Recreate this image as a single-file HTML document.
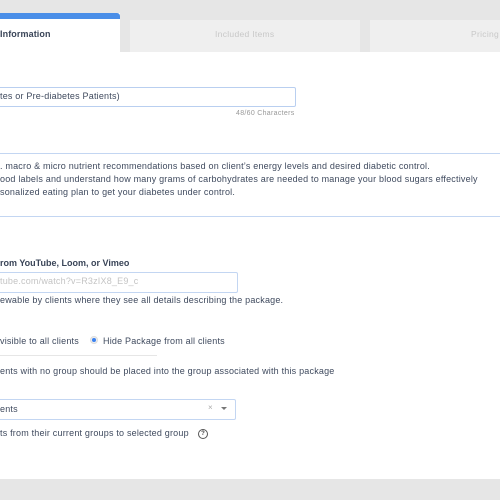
<!DOCTYPE html>
<html><head><style>
body{margin:0;width:500px;height:500px;overflow:hidden;background:#fff;font-family:"Liberation Sans",sans-serif;color:#3f4a5e;position:relative}
.a{position:absolute;white-space:nowrap}
.s{font-size:9px;letter-spacing:0.2px}
</style></head><body>
<div class="a" style="left:0;top:0;width:500px;height:52px;background:#e6e6e6"></div>
<div class="a" style="left:0;top:13px;width:120px;height:39px;background:#fff"></div>
<div class="a" style="left:0;top:13px;width:120px;height:6px;background:#4a8ee8;border-radius:0 3px 0 0"></div>
<div class="a" style="left:0;top:29px;font-size:9px;font-weight:bold;color:#3a4558;letter-spacing:0.1px">Information</div>
<div class="a" style="left:130px;top:20px;width:230px;height:32px;background:#efefef"></div>
<div class="a" style="left:215px;top:29px;font-size:8.5px;letter-spacing:0.3px;color:#c8c8c8">Included Items</div>
<div class="a" style="left:370px;top:20px;width:130px;height:32px;background:#efefef"></div>
<div class="a" style="left:471px;top:29px;font-size:8.5px;letter-spacing:0.3px;color:#c8c8c8">Pricing</div>

<div class="a" style="left:-5px;top:87px;width:299px;height:18px;border:1px solid #b9cff0;border-radius:2px"></div>
<div class="a s" style="left:0;top:91px">tes or Pre-diabetes Patients)</div>
<div class="a" style="left:236px;top:110px;width:58px;text-align:right;font-size:7px;letter-spacing:0.3px;color:#999">48/60 Characters</div>

<div class="a" style="left:-5px;top:153px;width:520px;height:62px;border:1px solid #c3d6f2"></div>
<div class="a s" style="left:0;top:161px">. macro &amp; micro nutrient recommendations based on client’s energy levels and desired diabetic control.</div>
<div class="a s" style="left:0;top:174px">ood labels and understand how many grams of carbohydrates are needed to manage your blood sugars effectively</div>
<div class="a s" style="left:0;top:187px">sonalized eating plan to get your diabetes under control.</div>

<div class="a s" style="left:0;top:258px;font-weight:bold;color:#3a4558;letter-spacing:0">rom YouTube, Loom, or Vimeo</div>
<div class="a" style="left:-5px;top:272px;width:241px;height:19px;border:1px solid #c3d6f2;border-radius:2px"></div>
<div class="a s" style="left:0;top:276px;color:#c4c4c4">tube.com/watch?v=R3zIX8_E9_c</div>
<div class="a s" style="left:0;top:295px">ewable by clients where they see all details describing the package.</div>

<div class="a s" style="left:0;top:336px">visible to all clients</div>
<div class="a" style="left:90px;top:336px;width:8px;height:8px;border-radius:50%;background:#eee;border:1px solid #ddd;box-sizing:border-box"></div>
<div class="a" style="left:92px;top:338px;width:4px;height:4px;border-radius:50%;background:#3b82f0"></div>
<div class="a s" style="left:103px;top:336px">Hide Package from all clients</div>
<div class="a" style="left:0;top:355px;width:157px;height:1px;background:#e6e6e6"></div>
<div class="a s" style="left:0;top:366px">ents with no group should be placed into the group associated with this package</div>

<div class="a" style="left:-5px;top:399px;width:239px;height:19px;border:1px solid #c3d6f2;border-radius:2px"></div>
<div class="a s" style="left:0;top:404px">ents</div>
<div class="a" style="left:208px;top:403px;font-size:8px;color:#aaa">×</div>
<div class="a" style="left:221px;top:407px;width:0;height:0;border-left:3px solid transparent;border-right:3px solid transparent;border-top:3px solid #777"></div>
<div class="a s" style="left:0;top:428px">ts from their current groups to selected group</div>
<div class="a" style="left:198px;top:429px;width:8px;height:8px;border:1px solid #555;border-radius:50%;font-size:6px;text-align:center;line-height:8px;font-weight:bold;color:#444">?</div>

<div class="a" style="left:0;top:479px;width:500px;height:21px;background:#e6e6e6"></div>
</body></html>
